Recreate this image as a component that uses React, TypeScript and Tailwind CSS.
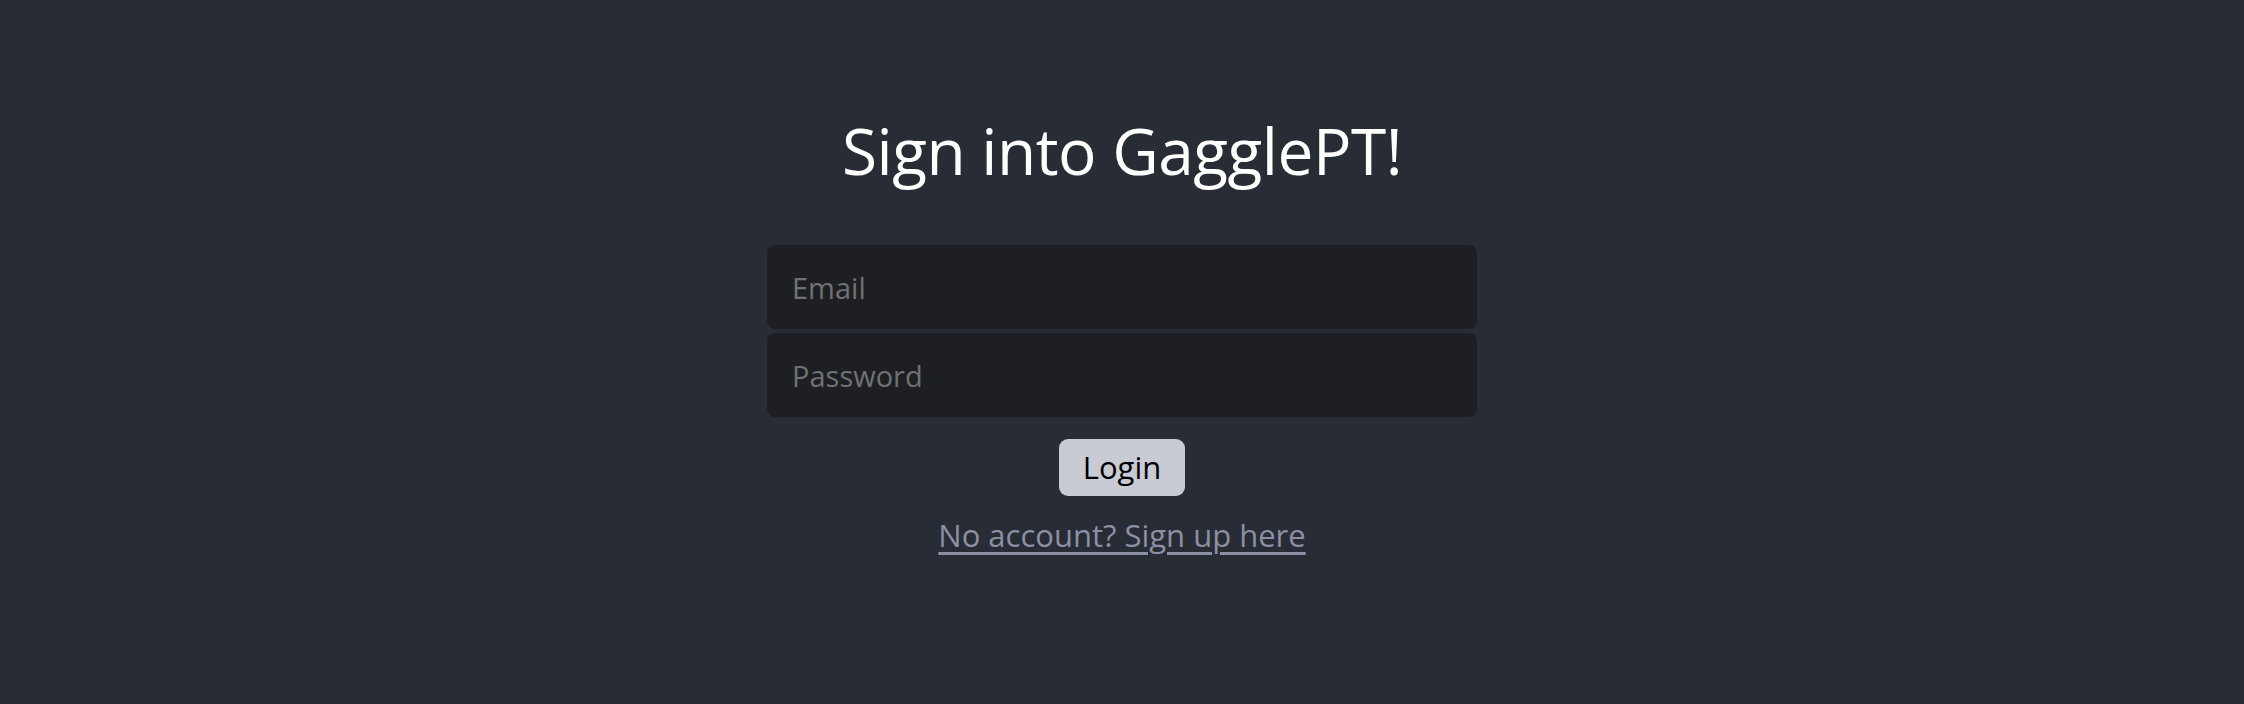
import React from 'react';

export default function App() {
  return (
    <div className="min-h-[704px] w-full bg-[#282c34] flex flex-col items-center pt-[108px] font-['Open_Sans',sans-serif]">
      {/* Heading */}
      <h1 className="text-[64px] leading-[86px] text-white font-normal tracking-[-0.5px]">Sign into GagglePT!</h1>

      {/* Form */}
      <form className="mt-[51px] flex flex-col items-center w-[710px]" onSubmit={(e) => e.preventDefault()}>
        <input
          type="email"
          placeholder="Email"
          className="w-full h-[84px] rounded-[8px] bg-[#1e1f22] px-[25px] text-[29px] text-white placeholder:text-[#6f7175] outline-none"
        />
        <input
          type="password"
          placeholder="Password"
          className="mt-[4px] w-full h-[84px] rounded-[8px] bg-[#1e1f22] px-[25px] text-[29px] text-white placeholder:text-[#6f7175] outline-none"
        />
        <button
          type="submit"
          className="mt-[22px] w-[126px] h-[57px] rounded-[9px] bg-[#c9cbd4] text-[31px] text-black leading-none"
        >
          Login
        </button>
        <a href="#" className="mt-[18px] text-[31px] leading-[42px] text-[#8b90a4] underline underline-offset-[5px]">
          No account? Sign up here
        </a>
      </form>
    </div>
  );
}
